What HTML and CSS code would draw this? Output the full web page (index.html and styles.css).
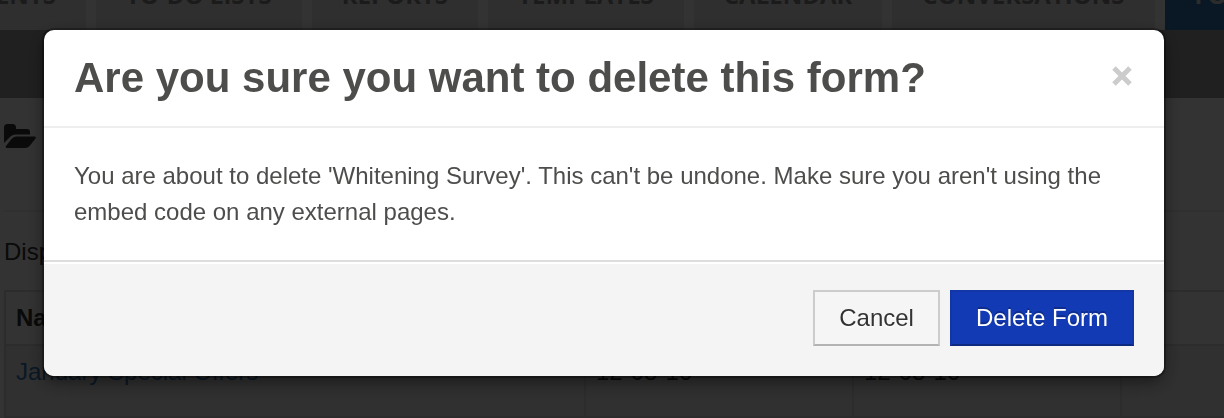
FILE: index.html
```html
<!DOCTYPE html>
<html lang="en">
<head>
    <meta charset="UTF-8">
    <meta name="viewport" content="width=device-width, initial-scale=1.0">
    <title>Forms</title>
    <link rel="stylesheet" href="styles.css">
</head>
<body>
    <nav class="tabs">
        <a href="#" class="tab tab-first">Patients</a>
        <a href="#" class="tab">To-Do Lists</a>
        <a href="#" class="tab">Reports</a>
        <a href="#" class="tab">Templates</a>
        <a href="#" class="tab">Calendar</a>
        <a href="#" class="tab">Conversations</a>
        <a href="#" class="tab active">Forms</a>
    </nav>
    <div class="subnav"></div>

    <main class="page">
        <div class="toolbar">
            <svg class="folder" viewBox="0 0 32 24" aria-hidden="true">
                <path d="M0 19V3.500Q0 0 3.500 0H8.500Q12 0 12 3.500V5H23Q26 5 26 8V10.500H12Q8 10.500 5.500 13.500Z"/>
                <path d="M12 12.500H30.500Q32.500 12.500 31.500 14.500L26 21.500Q24 24 21 24H3Q1 24 2 22L7.500 15Q9.500 12.500 12 12.500Z"/>
            </svg>
        </div>
        <p class="summary">Displaying</p>
        <table>
            <thead>
                <tr>
                    <th class="col-name">Name</th>
                    <th class="col-date"></th>
                    <th class="col-date"></th>
                    <th></th>
                </tr>
            </thead>
            <tbody>
                <tr>
                    <td><a href="#">January Special Offers</a></td>
                    <td>12-08-16</td>
                    <td>12-08-16</td>
                    <td></td>
                </tr>
            </tbody>
        </table>
    </main>

    <div class="backdrop">
        <div class="modal" role="dialog" aria-modal="true" aria-labelledby="modalTitle">
            <div class="modal-header">
                <h1 id="modalTitle">Are you sure you want to delete this form?</h1>
                <button type="button" class="close" aria-label="Close">
                    <svg viewBox="0 0 20 20" aria-hidden="true">
                        <path d="M2 2L18 18M18 2L2 18"/>
                    </svg>
                </button>
            </div>
            <div class="modal-body">
                <p>You are about to delete 'Whitening Survey'. This can't be undone. Make sure you aren't using the embed code on any external pages.</p>
            </div>
            <div class="modal-footer">
                <button type="button" class="btn">Cancel</button>
                <button type="button" class="btn btn-primary">Delete Form</button>
            </div>
        </div>
    </div>
</body>
</html>
```

FILE: styles.css
```css
* {
    margin: 0;
    padding: 0;
    box-sizing: border-box;
}

body {
    font-family: "Liberation Sans", Arial, sans-serif;
    font-size: 24px;
    line-height: 36px;
    color: #333;
    background: #fff;
    min-height: 100vh;
    overflow: hidden;
}

/* main navigation */
.tabs {
    display: flex;
    gap: 10px;
    height: 30px;
    overflow: hidden;
    background: #fff;
}

.tab {
    display: flex;
    align-items: flex-end;
    flex: none;
    padding: 0 30px 17px;
    background: #ebebeb;
    color: #888;
    font-family: "Open Sans", sans-serif;
    font-size: 24px;
    font-weight: 700;
    line-height: 36px;
    text-transform: uppercase;
    text-decoration: none;
}

.tab-first {
    justify-content: flex-end;
    width: 86px;
}

.tab.active {
    background: #337ab7;
    color: #ddd;
}

.subnav {
    height: 68px;
    background: #a0a0a0;
}

/* forms list */
.page {
    padding-left: 4px;
}

.toolbar {
    height: 114px;
    padding-top: 26px;
    border-bottom: 2px solid #eee;
}

.folder {
    display: block;
    width: 32px;
    height: 24px;
    fill: #333;
}

.summary {
    padding: 22px 0 20px;
}

table {
    width: 100%;
    border-collapse: collapse;
    table-layout: fixed;
}

th,
td {
    padding: 8px 10px;
    border: 2px solid #ddd;
    text-align: left;
    vertical-align: top;
}

th:last-child,
td:last-child {
    border-right: 0;
}

.col-name {
    width: 580px;
}

.col-date {
    width: 268px;
}

td {
    padding-bottom: 26px;
    background: #f0f0f0;
}

td a {
    color: #337ab7;
    text-decoration: none;
}

/* dialog */
.backdrop {
    position: fixed;
    inset: 0;
    padding: 30px 60px 0 44px;
    background: rgba(0, 0, 0, 0.8);
}

.modal {
    background: #fff;
    border-radius: 10px;
    box-shadow: 0 0 0 2px rgba(0, 0, 0, 0.3), 0 6px 18px rgba(0, 0, 0, 0.5);
    color: #4d4d4b;
    overflow: hidden;
}

.modal-header {
    display: flex;
    align-items: flex-start;
    justify-content: space-between;
    padding: 19px 30px;
    border-bottom: 2px solid #eee;
}

h1 {
    font-size: 42px;
    font-weight: 700;
    line-height: 58px;
}

.close {
    width: 24px;
    height: 54px;
    padding: 2px;
    border: 0;
    background: none;
    cursor: pointer;
}

.close svg {
    display: block;
    width: 20px;
    height: 20px;
    fill: none;
    stroke: #ccc;
    stroke-width: 5;
}

.modal-body {
    padding: 30px;
}

.modal-footer {
    display: flex;
    justify-content: flex-end;
    gap: 10px;
    padding: 28px 30px 30px;
    border-top: 2px solid #ddd;
    background: #f4f4f4;
    box-shadow: inset 0 2px 0 #fff;
}

.btn {
    height: 56px;
    padding: 0 24px;
    border: 2px solid #ccc;
    border-bottom-color: #b3b3b3;
    background: #f5f5f5;
    color: #333;
    font: inherit;
    text-shadow: 0 2px 2px rgba(255, 255, 255, 0.75);
    cursor: pointer;
}

.btn-primary {
    border-color: #1236a5;
    border-bottom-color: #0e2a80;
    background: #133ab5;
    color: #fff;
    text-shadow: 0 -2px 0 rgba(0, 0, 0, 0.25);
}
```
